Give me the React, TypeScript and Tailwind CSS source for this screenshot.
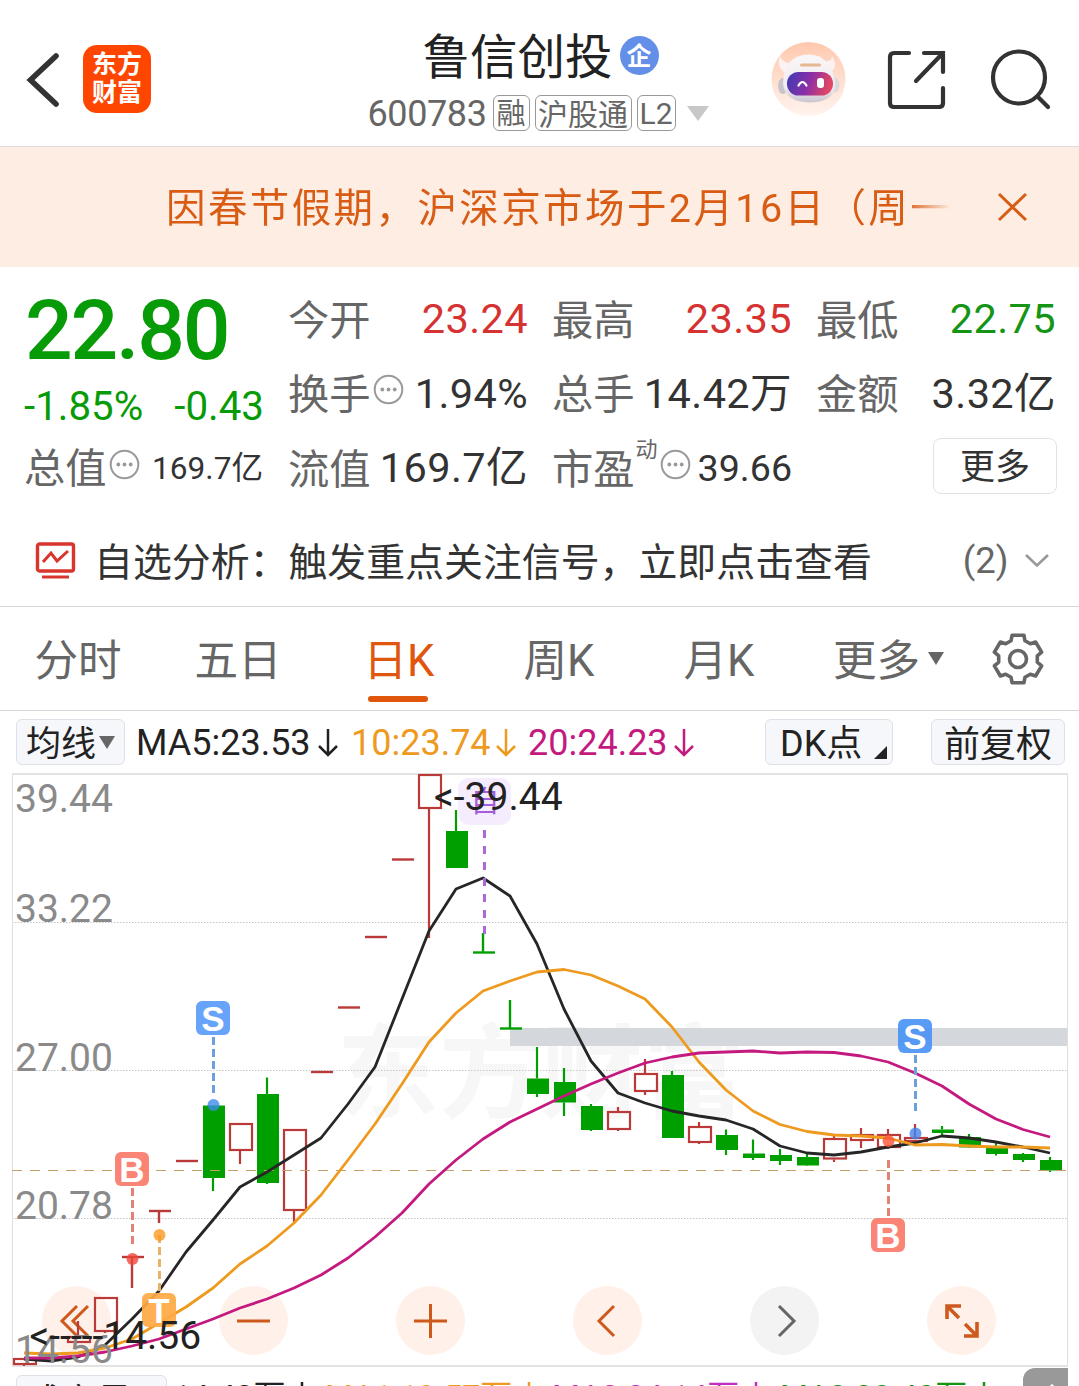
import type { ReactNode } from "react";

type Candle = {
  i: number;
  kind: "up" | "down" | "flat-up" | "flat-down";
  top: number;
  bottom: number;
  high: number;
  low: number;
};

const RED = "#b93a38";
const GREEN = "#009f00";

const candles: Candle[] = [
  { i: 0, kind: "up", top: 1358, bottom: 1365, high: 1358, low: 1366 },
  { i: 2, kind: "up", top: 1336, bottom: 1343, high: 1321, low: 1343 },
  { i: 3, kind: "up", top: 1297, bottom: 1332, high: 1297, low: 1333 },
  { i: 4, kind: "flat-up", top: 1257, bottom: 1257, high: 1257, low: 1288 },
  { i: 5, kind: "flat-up", top: 1211, bottom: 1211, high: 1211, low: 1223 },
  { i: 6, kind: "flat-up", top: 1161, bottom: 1161, high: 1161, low: 1161 },
  { i: 7, kind: "down", top: 1105.5, bottom: 1178, high: 1105.5, low: 1191 },
  { i: 8, kind: "up", top: 1123, bottom: 1151, high: 1123, low: 1164 },
  { i: 9, kind: "down", top: 1094, bottom: 1183, high: 1077.5, low: 1184 },
  { i: 10, kind: "up", top: 1129, bottom: 1211, high: 1129, low: 1223 },
  { i: 11, kind: "flat-up", top: 1072, bottom: 1072, high: 1072, low: 1072 },
  { i: 12, kind: "flat-up", top: 1007.5, bottom: 1007.5, high: 1007, low: 1007 },
  { i: 13, kind: "flat-up", top: 937, bottom: 937, high: 937, low: 937 },
  { i: 14, kind: "flat-up", top: 859.5, bottom: 859.5, high: 859, low: 859 },
  { i: 15, kind: "up", top: 774, bottom: 809, high: 774, low: 938 },
  { i: 16, kind: "down", top: 831, bottom: 868, high: 810, low: 868 },
  { i: 17, kind: "flat-down", top: 952.5, bottom: 952.5, high: 933, low: 952 },
  { i: 18, kind: "flat-down", top: 1028.5, bottom: 1028.5, high: 1000, low: 1028 },
  { i: 19, kind: "down", top: 1078.5, bottom: 1094, high: 1047, low: 1097 },
  { i: 20, kind: "down", top: 1082, bottom: 1102.5, high: 1068, low: 1116 },
  { i: 21, kind: "down", top: 1106, bottom: 1130, high: 1104, low: 1131 },
  { i: 22, kind: "up", top: 1111, bottom: 1130, high: 1107, low: 1131 },
  { i: 23, kind: "up", top: 1073, bottom: 1092, high: 1059, low: 1095 },
  { i: 24, kind: "down", top: 1075, bottom: 1138, high: 1071, low: 1138 },
  { i: 25, kind: "up", top: 1126, bottom: 1143, high: 1122, low: 1144 },
  { i: 26, kind: "down", top: 1135, bottom: 1150, high: 1129.5, low: 1155 },
  { i: 27, kind: "down", top: 1153.5, bottom: 1158, high: 1139.5, low: 1160 },
  { i: 28, kind: "down", top: 1155, bottom: 1161, high: 1149, low: 1165 },
  { i: 29, kind: "down", top: 1157, bottom: 1165.5, high: 1153, low: 1166 },
  { i: 30, kind: "up", top: 1138, bottom: 1159.5, high: 1136, low: 1162 },
  { i: 31, kind: "up", top: 1134, bottom: 1141, high: 1128, low: 1148 },
  { i: 32, kind: "up", top: 1134, bottom: 1148, high: 1129, low: 1149 },
  { i: 33, kind: "up", top: 1137, bottom: 1142, high: 1124, low: 1142 },
  { i: 34, kind: "down", top: 1129.5, bottom: 1133, high: 1126, low: 1137 },
  { i: 35, kind: "down", top: 1137, bottom: 1147.5, high: 1134, low: 1148 },
  { i: 36, kind: "down", top: 1148, bottom: 1154, high: 1142, low: 1155.5 },
  { i: 37, kind: "down", top: 1154, bottom: 1160, high: 1153, low: 1162 },
  { i: 38, kind: "down", top: 1160, bottom: 1170.5, high: 1157, low: 1172 },
];

const ma5 = [
  1359, 1361, 1357, 1345, 1319, 1291, 1252, 1220, 1187, 1172, 1155, 1138, 1104,
  1067, 999, 931, 889, 878, 896, 944, 1009, 1061, 1093, 1103, 1111, 1116, 1120,
  1129, 1146, 1153, 1155, 1152, 1147, 1143, 1136, 1138, 1142, 1147, 1153,
];
const ma10 = [
  1353, 1354, 1353, 1348, 1339, 1323, 1307, 1288, 1264, 1246, 1223, 1195, 1160,
  1124, 1084, 1042, 1013, 991, 981, 972, 969.5, 975, 986, 999, 1027, 1062, 1090,
  1111, 1124.5, 1131.5, 1135, 1136, 1138, 1145, 1144.5, 1146, 1147, 1147, 1148,
];
const ma20 = [
  1358, 1358, 1356, 1352, 1346, 1339, 1329, 1319, 1308, 1299, 1288, 1275, 1258,
  1237, 1213, 1184, 1160, 1139, 1122, 1109, 1096, 1084, 1073, 1063, 1057, 1053,
  1052, 1051, 1053, 1052, 1052.5, 1056, 1062, 1073, 1086, 1104, 1119, 1129.5,
  1137,
];

const xOf = (i: number) => 24 + 27 * i;
const toPoints = (line: number[]) => line.map((y, i) => `${xOf(i)},${y}`).join(" ");

const markers = [
  { text: "S", x: 213, y: 1018, from: 1037, to: 1095, dot: 1105, box: "#5a9cf8", line: "#6ba0dc", fill: "#3b8bea" },
  { text: "B", x: 132, y: 1169, from: 1188, to: 1245, dot: 1259, box: "#fa7a6a", line: "#e08375", fill: "#f0463a" },
  { text: "T", x: 159, y: 1310, from: 1235, to: 1293, dot: 1235, box: "#fea944", line: "#e8b366", fill: "#fb9a22" },
  { text: "S", x: 915, y: 1036, from: 1055, to: 1112, dot: 1133.5, box: "#4b94f5", line: "#6ba0dc", fill: "#4584ee" },
  { text: "B", x: 888, y: 1235, from: 1160, to: 1217, dot: 1141, box: "#fa7a6a", line: "#e08375", fill: "#ff5436" },
];

function CandleShape({ candle }: { candle: Candle }) {
  const { kind, top, bottom, high, low } = candle;
  const x = xOf(candle.i);
  const color = kind === "up" || kind === "flat-up" ? RED : GREEN;

  if (kind === "flat-up" || kind === "flat-down") {
    return (
      <g stroke={color} strokeWidth="2.4">
        <line x1={x - 10} x2={x + 12} y1={top} y2={top} />
        {high !== low && <line x1={x} x2={x} y1={high} y2={low} />}
      </g>
    );
  }

  return (
    <g stroke={color} strokeWidth="2.2">
      {high < top && <line x1={x} x2={x} y1={high} y2={top} />}
      {low > bottom && <line x1={x} x2={x} y1={bottom} y2={low} />}
      {kind === "up" ? (
        <rect x={x - 10} y={top + 1} width={22} height={bottom - top - 2} fill="none" />
      ) : (
        <rect x={x - 10} y={top} width={22} height={bottom - top} fill={color} stroke="none" />
      )}
    </g>
  );
}

function KLineChart() {
  return (
    <svg
      className="pointer-events-none absolute inset-0"
      width="1079"
      height="595"
      viewBox="0 773 1079 595"
      fontFamily="Roboto, 'Noto Sans CJK SC', sans-serif"
      fontSize="39"
    >
      <text x="337" y="1110" fontSize="102" fontWeight="700" fill="#f7f7f7">
        东方财富
      </text>
      <g stroke="#c6c6c6" strokeDasharray="1.5 1.5">
        <line x1="12" x2="1068" y1="922.5" y2="922.5" />
        <line x1="12" x2="1068" y1="1070.5" y2="1070.5" />
        <line x1="12" x2="1068" y1="1218.5" y2="1218.5" />
      </g>
      <path d="M12.5 774V1366M1067.5 774V1366" stroke="#dedede" />
      <path d="M12 774H1068M12 1366H1068" stroke="#e3e3e3" strokeWidth="2" />
      <rect x="510" y="1028" width="557" height="18" fill="#d4d8dd" />

      {candles.map((candle) => (
        <CandleShape key={candle.i} candle={candle} />
      ))}

      <line x1="12" x2="1067" y1="1170.5" y2="1170.5" stroke="#c3a169" strokeWidth="1.2" strokeDasharray="10 8" />

      <g fill="none" strokeWidth="2.8" strokeLinejoin="round">
        <polyline points={toPoints(ma5)} stroke="#262626" />
        <polyline points={toPoints(ma10)} stroke="#ee9a1f" />
        <polyline points={toPoints(ma20)} stroke="#c41a7f" />
      </g>

      <rect x="458" y="778" width="53" height="47" rx="10" fill="#f5ecfe" />
      <text x="485" y="812" fontSize="29" textAnchor="middle" fill="#a35ddd">
        自
      </text>
      <line x1="484.5" x2="484.5" y1="830" y2="934" stroke="#a968d8" strokeWidth="3" strokeDasharray="8 8" />

      {markers.map((m) => (
        <g key={`${m.text}${m.x}`}>
          <line x1={m.x + 0.5} x2={m.x + 0.5} y1={m.from} y2={m.to} stroke={m.line} strokeWidth="3" strokeDasharray="8 4" />
          <circle cx={m.x + 0.5} cy={m.dot} r="6" fill={m.fill} fillOpacity="0.8" />
          <rect x={m.x - 17} y={m.y - 17} width="34" height="34" rx="6" fill={m.box} fillOpacity="0.92" />
          <text
            x={m.x}
            y={m.y + 12.5}
            fontFamily="'Liberation Sans', sans-serif"
            fontSize="35"
            fontWeight="700"
            textAnchor="middle"
            fill="#fff"
          >
            {m.text}
          </text>
        </g>
      ))}

      <g fill="#8a8a8a">
        <text x="15" y="812">39.44</text>
        <text x="15" y="922">33.22</text>
        <text x="15" y="1071">27.00</text>
        <text x="15" y="1219">20.78</text>
        <text x="15" y="1363">14.56</text>
      </g>
      <g fill="#222">
        <text x="434" y="810">&lt;-39.44</text>
        <text x="29.5" y="1349">&lt;-----14.56</text>
      </g>
    </svg>
  );
}

function RoundButton({ children, muted }: { children: ReactNode; muted?: boolean }) {
  return (
    <button
      className={`flex size-[69px] items-center justify-center rounded-full ${
        muted ? "bg-[#f3f3f3] text-[#666]" : "bg-[#fff1ea] text-[#cd5a1c]"
      }`}
    >
      <svg width="40" height="40" viewBox="-20 -20 40 40" fill="none" stroke="currentColor" strokeWidth="3">
        {children}
      </svg>
    </button>
  );
}

function InfoDots() {
  return (
    <svg className="mb-2 ml-0.5 shrink-0" width="31" height="31" viewBox="0 0 31 31">
      <circle cx="15.5" cy="15.5" r="13.8" fill="none" stroke="#999" strokeWidth="2" />
      <g fill="#999">
        <circle cx="9.3" cy="15.5" r="1.9" />
        <circle cx="15.5" cy="15.5" r="1.9" />
        <circle cx="21.7" cy="15.5" r="1.9" />
      </g>
    </svg>
  );
}

type QuoteProps = { label: string; value: string; color?: string; info?: boolean };

function Quote({ label, value, color = "text-[#333]", info }: QuoteProps) {
  return (
    <div className="flex h-[74.5px] items-center justify-between whitespace-nowrap">
      <span className="-ml-px flex items-center text-[41.3px] text-[#666]">
        <span className="pt-1">{label}</span>
        {info && <InfoDots />}
      </span>
      <span className={`-mr-px pb-px text-[41.5px] tracking-[0.4px] ${color}`}>{value}</span>
    </div>
  );
}

function Robot() {
  return (
    <svg width="76" height="76" viewBox="0 0 76 76">
      <defs>
        <linearGradient id="robotBg" x1="0" y1="0" x2="0" y2="1">
          <stop offset="0" stopColor="#ffc8ae" />
          <stop offset="1" stopColor="#fff4ee" />
        </linearGradient>
        <linearGradient id="visor" x1="0" y1="0" x2="1" y2="0.2">
          <stop offset="0" stopColor="#3a3bb5" />
          <stop offset="0.55" stopColor="#8d2fa6" />
          <stop offset="1" stopColor="#e04763" />
        </linearGradient>
        <linearGradient id="helmet" x1="0" y1="0" x2="0" y2="1">
          <stop offset="0" stopColor="#faf7f8" />
          <stop offset="0.7" stopColor="#eeeaf0" />
          <stop offset="1" stopColor="#c9c4ce" />
        </linearGradient>
      </defs>
      <circle cx="37.5" cy="38" r="37" fill="url(#robotBg)" />
      <path d="M9 15Q5 27 15 32L22 22Q12 23 9 15ZM61 15Q68 26 59 31L51 20Q61 22 61 15Z" fill="#fbf2f1" />
      <ellipse cx="12" cy="45" rx="5" ry="8" fill="#c9c4cb" />
      <ellipse cx="64" cy="44" rx="4.5" ry="7.5" fill="#ddd8de" />
      <path d="M12 42Q13 14 38 13.5Q59 14 64 40Q66 61 39 61.5Q13 61 12 42Z" fill="url(#helmet)" />
      <rect x="29" y="22.5" width="21" height="3" rx="1.5" fill="#e6b791" />
      <rect x="16" y="31" width="46" height="23.5" rx="11.5" fill="url(#visor)" />
      <path d="M27.5 44.5Q31.5 37.5 35.5 44.5" fill="none" stroke="#fff" strokeWidth="2.2" strokeLinecap="round" />
      <rect x="46" y="37" width="7" height="10" rx="3" fill="#fff" />
    </svg>
  );
}

function Header() {
  return (
    <header className="flex h-[147px] shrink-0 border-b border-[#dcdcdc]">
      <div className="flex w-[308px] items-center pt-3 pl-6">
        <svg width="38" height="60" viewBox="0 0 38 60" fill="none" stroke="#333" strokeWidth="5.6" strokeLinecap="round">
          <path d="M32 7L6.5 31L32 55" />
        </svg>
        <div className="ml-[21px] flex size-[68px] flex-col items-center justify-center rounded-[14px] bg-[#ff4600] text-[25px] leading-[28px] font-bold text-white">
          <span>东方</span>
          <span>财富</span>
        </div>
      </div>

      <div className="flex flex-1 flex-col items-center">
        <div className="mt-[26px] ml-0.5 flex h-[58px] items-center">
          <h1 className="pt-[7px] text-[47.5px] leading-none text-[#222]">鲁信创投</h1>
          <span className="ml-[7px] flex size-[39px] items-center justify-center rounded-full bg-[#648fe9] pt-0.5 text-[25px] font-bold text-white">
            企
          </span>
        </div>
        <div className="-ml-[3px] flex h-[58px] items-center text-[#666]">
          <span className="pt-0.5 text-[36px] leading-none tracking-[-0.4px]">600783</span>
          <span className="ml-1.5 flex h-9 w-[37px] items-center justify-center rounded-md border-[1.5px] border-[#999] pt-[3px] text-[29px]">
            融
          </span>
          <span className="ml-[5px] flex h-9 w-[97px] items-center justify-center rounded-md border-[1.5px] border-[#999] pt-[3px] text-[30px]">
            沪股通
          </span>
          <span className="ml-[5px] flex h-9 w-[39px] items-center justify-center rounded-md border-[1.5px] border-[#999] pt-px text-[30px]">
            L2
          </span>
          <svg className="ml-[11px]" width="22" height="15" viewBox="0 0 22 15">
            <path d="M0 0H22L11 15Z" fill="#c8c8c8" />
          </svg>
        </div>
      </div>

      <div className="flex w-[308px] items-center pt-3">
        <Robot />
        <svg className="ml-10" width="60" height="60" viewBox="0 0 60 60" fill="none" stroke="#333" strokeWidth="4.2" strokeLinecap="round">
          <path d="M22 4H7Q3 4 3 8V54Q3 58 7 58H52Q56 58 56 54V39" />
          <path d="M37 4H56V23M56 4L29 32" />
        </svg>
        <svg className="ml-[42px]" width="64" height="64" viewBox="0 0 64 64" fill="none" stroke="#333" strokeWidth="4.2" strokeLinecap="round">
          <circle cx="30" cy="30.5" r="26" />
          <path d="M49 50L59 60" />
        </svg>
      </div>
    </header>
  );
}

function Gear() {
  const points: string[] = [];
  for (let k = 0; k < 6; k++) {
    for (const [r, deg] of [
      [19.5, -21],
      [24.5, -14],
      [24.5, 14],
      [19.5, 21],
    ]) {
      const a = ((k * 60 + deg) * Math.PI) / 180;
      points.push(`${(r * Math.sin(a)).toFixed(1)},${(-r * Math.cos(a)).toFixed(1)}`);
    }
  }

  return (
    <svg width="54" height="54" viewBox="-27 -27 54 54" fill="none" stroke="#666" strokeWidth="3.6" strokeLinejoin="round">
      <polygon points={points.join(" ")} />
      <circle r="8.5" />
    </svg>
  );
}

function DownArrow() {
  return (
    <svg width="22" height="30" viewBox="0 0 22 30" fill="none" stroke="currentColor" strokeWidth="2.5">
      <path d="M11 1V27M2 18L11 27L20 18" />
    </svg>
  );
}

function Caret() {
  return (
    <svg width="16" height="13" viewBox="0 0 16 13">
      <path d="M0 0H16L8 13Z" fill="#666" />
    </svg>
  );
}

const tabs = ["分时", "五日", "日K", "周K", "月K"];

export default function App() {
  return (
    <div className="flex h-[1386px] w-[1079px] flex-col overflow-hidden bg-white font-['Roboto','Noto_Sans_CJK_SC',sans-serif] leading-none">
      <Header />

      <div className="flex h-[120px] shrink-0 items-center bg-[#fdede3] text-[#d95c14]">
        <div className="ml-[166px] w-[785px] overflow-hidden pt-[3px] text-[39.5px] leading-[60px] tracking-[2.4px] whitespace-nowrap [mask-image:linear-gradient(to_right,#000_94%,transparent)]">
          因春节假期，沪深京市场于2月16日（周一
        </div>
        <svg className="ml-[46px]" width="30" height="30" viewBox="0 0 30 30" stroke="currentColor" strokeWidth="3">
          <path d="M2 2L29 28M29 2L2 28" />
        </svg>
      </div>

      <section className="grid h-[248px] shrink-0 grid-cols-[238px_238px_238px_238px] gap-x-[26px] pl-[25px]">
        <div className="whitespace-nowrap text-[#079b07]">
          <div className="flex h-[102px] items-end text-[84px] font-medium tracking-[-2.2px]">
            <span className="-mb-1">22.80</span>
          </div>
          <div className="-mr-px flex h-[74px] items-center justify-between pt-0.5 text-[40.3px]">
            <span className="-ml-px">-1.85%</span>
            <span>-0.43</span>
          </div>
          <div className="flex h-[50px] items-center">
            <span className="-ml-px pt-1 text-[41.3px] text-[#666]">总值</span>
            <InfoDots />
            <span className="ml-auto pt-0.5 text-[31.6px] text-[#333]">169.7亿</span>
          </div>
        </div>
        <div className="pt-[15px]">
          <Quote label="今开" value="23.24" color="text-[#d63232]" />
          <Quote label="换手" value="1.94%" info />
          <Quote label="流值" value="169.7亿" />
        </div>
        <div className="pt-[15px]">
          <Quote label="最高" value="23.35" color="text-[#d63232]" />
          <Quote label="总手" value="14.42万" />
          <div className="flex h-[74.5px] items-center justify-between whitespace-nowrap">
            <span className="-ml-px flex items-center text-[41.3px] text-[#666]">
              <span className="pt-1">市盈</span>
              <span className="mb-9 ml-px text-[22px]">动</span>
              <InfoDots />
            </span>
            <span className="-mr-px pt-0.5 text-[37.6px] text-[#333]">39.66</span>
          </div>
        </div>
        <div className="pt-[15px]">
          <Quote label="最低" value="22.75" color="text-[#159415]" />
          <Quote label="金额" value="3.32亿" />
          <button className="mt-[7px] -mr-0.5 ml-auto flex h-[56px] w-[124px] items-center justify-center rounded-lg border-[1.5px] border-[#e2e2e2] pt-0.5 text-[35px] text-[#333]">
            更多
          </button>
        </div>
      </section>

      <div className="flex h-[92px] shrink-0 items-center border-b border-[#d8d8d8] pl-[35px]">
        <svg className="-mt-0.5" width="42" height="38" viewBox="0 0 42 38" fill="none" stroke="#d8352f" strokeWidth="3.4">
          <rect x="2.5" y="3" width="36" height="27" rx="2" />
          <path d="M7 36H34" strokeWidth="3" />
          <path d="M8 21L16 12L22 20L33 10" strokeWidth="3" />
        </svg>
        <span className="ml-[17px] pt-1.5 text-[38.9px] whitespace-nowrap text-[#333]">
          自选分析：触发重点关注信号，立即点击查看
        </span>
        <span className="ml-[91px] pt-0.5 text-[36.5px] text-[#666]">(2)</span>
        <svg className="ml-[15px]" width="26" height="16" viewBox="0 0 26 16" fill="none" stroke="#999" strokeWidth="2.6">
          <path d="M2 2L13 12.5L24 2" />
        </svg>
      </div>

      <nav className="flex h-[104px] shrink-0 items-stretch border-b border-[#d8d8d8] text-[43.6px] text-[#666]">
        {tabs.map((tab) => (
          <button
            key={tab}
            className={`flex w-40 flex-col items-center pt-[33px] ${
              tab === "分时" ? "-ml-0.5" : ""
            } ${tab === "日K" ? "text-[#e0560c]" : ""}`}
          >
            <span className={tab.endsWith("K") ? "ml-0.5" : ""}>{tab}</span>
            {tab === "日K" && <span className="mt-3 h-1.5 w-[60px] rounded-full bg-[#e0560c]" />}
          </button>
        ))}
        <button className="ml-[35px] flex h-[103px] items-center gap-2">
          <span className="pt-1.5">更多</span>
          <Caret />
        </button>
        <button className="ml-[47px] flex h-[103px] items-center">
          <Gear />
        </button>
      </nav>

      <div className="flex h-[62px] shrink-0 items-center pl-4 text-[36px] whitespace-nowrap text-[#222]">
        <button className="flex h-[46px] w-[109px] items-center justify-center gap-[3px] rounded-md border border-[#dfe1e8] bg-[#f6f7fa] text-[35px]">
          <span className="pt-1">均线</span>
          <Caret />
        </button>
        <div className="ml-[11px] flex w-[215px] items-center gap-1.5 pt-0.5">
          MA5:23.53
          <DownArrow />
        </div>
        <div className="flex w-[177px] items-center gap-1 pt-0.5 text-[#ee9a1f]">
          10:23.74
          <DownArrow />
        </div>
        <div className="flex w-[237px] items-center gap-[5px] pt-0.5 text-[#c41a7f]">
          20:24.23
          <DownArrow />
        </div>
        <button className="flex h-[46px] w-[128px] items-center rounded-md border border-[#dfe1e8] bg-[#f6f7fa] pl-3.5">
          <span className="pt-[3px]">DK点</span>
          <svg className="mt-5 ml-3" width="13" height="13" viewBox="0 0 13 13">
            <path d="M13 0V13H0Z" fill="#222" />
          </svg>
        </button>
        <button className="ml-[38px] flex h-[46px] w-[134px] items-center justify-center rounded-md border border-[#dfe1e8] bg-[#f6f7fa] pt-[5px]">
          前复权
        </button>
      </div>

      <div className="relative h-[595px] shrink-0">
        <div className="absolute top-[513px] left-[42px] flex w-[954px] justify-between">
          <RoundButton>
            <path d="M0 -15L-15 0L0 15M11 -15L-4 0L11 15" />
          </RoundButton>
          <RoundButton>
            <path d="M-17 0H16" />
          </RoundButton>
          <RoundButton>
            <path d="M-17 0H16M-0.5 -17V17" />
          </RoundButton>
          <RoundButton>
            <path d="M6 -15L-9 0L6 15" />
          </RoundButton>
          <RoundButton muted>
            <path d="M-6 -15L9 0L-6 15" />
          </RoundButton>
          <RoundButton>
            <path strokeWidth="3.6" d="M-15 -2V-15H-1M-15 -15L-3 -3M2 15H15V1M3 3L15 15" />
          </RoundButton>
        </div>
        <KLineChart />
      </div>

      <div className="flex h-[60px] shrink-0 items-start pl-4 text-[32px] whitespace-nowrap">
        <button className="mt-[7px] flex h-[50px] w-[151px] items-center gap-1 rounded-md border border-[#dfe1e8] bg-[#f6f7fa] pt-[5px] pl-2.5 text-[35px] text-[#222]">
          成交量
          <Caret />
        </button>
        <div className="mt-3 ml-1.5 flex w-[152px] items-center gap-1.5 text-[#222]">
          14.42万
          <DownArrow />
        </div>
        <div className="mt-3 flex w-[227px] items-center gap-1.5 text-[#ee9a1f]">
          MA1:19.57万
          <DownArrow />
        </div>
        <div className="mt-3 flex w-[228px] items-center gap-1.5 text-[#c02fc0]">
          MA2:24.14万
          <DownArrow />
        </div>
        <div className="mt-3 flex w-[243px] items-center gap-1.5 text-[#159415]">
          MA3:20.40万
          <DownArrow />
        </div>
        <div className="flex h-[60px] w-[45px] justify-center rounded-tl-xl bg-[#999] pt-4 text-white">
          <svg className="ml-3" width="22" height="14" viewBox="0 0 22 14" fill="none" stroke="currentColor" strokeWidth="3">
            <path d="M2 12L11 2L20 12" />
          </svg>
        </div>
      </div>
    </div>
  );
}
